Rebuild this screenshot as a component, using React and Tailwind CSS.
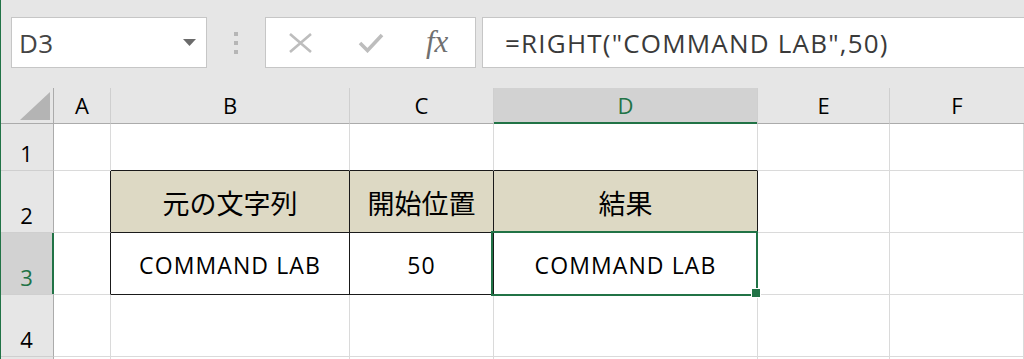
import React from "react";

function HeaderCell({ children, active, last }) {
  return (
    <div
      className={`relative flex items-center justify-center border-b border-[#ababab] ${last ? "" : "border-r border-r-[#cfcfcf]"} ${active ? "bg-[#d2d2d2] text-[#217346]" : "bg-[#e6e6e6] text-black"} text-[22px]`}
      style={{ fontFamily: '"Open Sans", "Noto Sans", sans-serif' }}
    >
      {children}
      {active && <div className="absolute left-0 right-0 bottom-[-1px] h-[2px] bg-[#217346]" />}
    </div>
  );
}

function RowHead({ n, active }) {
  return (
    <div
      className={`relative flex items-end justify-center pb-[6px] border-b border-[#cfcfcf] border-r border-r-[#ababab] ${active ? "bg-[#d2d2d2] text-[#217346]" : "bg-[#e6e6e6] text-black"} text-[22px] leading-none`}
      style={{ fontFamily: '"Open Sans", "Noto Sans", sans-serif' }}
    >
      {n}
      {active && <div className="absolute top-0 bottom-0 right-[-1px] w-[2px] bg-[#217346]" />}
    </div>
  );
}

function Cell({ children, r = "#dadada", b = "#dadada", bg = "bg-white", latin }) {
  return (
    <div
      className={`flex items-center justify-center ${bg} text-black ${latin ? "text-[23px] tracking-[1.1px] pt-[3px]" : "text-[27px] pt-[4px]"}`}
      style={{
        borderRight: `1px solid ${r}`,
        borderBottom: `1px solid ${b}`,
        fontFamily: latin
          ? '"Open Sans", "Noto Sans", sans-serif'
          : '"Noto Sans CJK JP", "Noto Sans", sans-serif',
      }}
    >
      {children}
    </div>
  );
}

export default function App() {
  const K = "#1a1a1a";
  return (
    <div className="relative w-[1024px] h-[359px] overflow-hidden bg-white">
      <div className="absolute left-0 top-0 bottom-0 w-[1px] bg-[#217346] z-20" />
      {/* formula bar */}
      <div className="h-[88px] bg-[#e6e6e6] flex items-start pt-[17px]">
        <div
          className="ml-[11px] w-[196px] h-[51px] bg-white border border-[#c6c6c6] flex items-center justify-between pl-[7px] pr-[10px]"
          style={{ fontFamily: '"Open Sans", "Noto Sans", sans-serif' }}
        >
          <span className="text-[26px] text-[#444] leading-none tracking-[0.5px]">D3</span>
          <svg width="13" height="7" viewBox="0 0 13 7"><path d="M0 0 L13 0 L6.5 7 Z" fill="#6b6b6b" /></svg>
        </div>
        <div className="w-[58px] h-[51px] flex flex-col items-center justify-center gap-[5px]">
          <div className="w-[4px] h-[4px] bg-[#b6b6b6]" />
          <div className="w-[4px] h-[4px] bg-[#b6b6b6]" />
          <div className="w-[4px] h-[4px] bg-[#b6b6b6]" />
        </div>
        <div className="w-[211px] h-[51px] bg-white border border-[#c6c6c6] flex items-center">
          <svg className="ml-[22px]" width="25" height="20" viewBox="0 0 25 20">
            <path d="M2 1 L23 19 M23 1 L2 19" stroke="#bdbdbd" strokeWidth="2.6" fill="none" />
          </svg>
          <svg className="ml-[45px]" width="26" height="20" viewBox="0 0 26 20">
            <path d="M2 10 L9.5 17.5 L24 2" stroke="#bdbdbd" strokeWidth="3.6" fill="none" />
          </svg>
          <span
            className="ml-[42px] mt-[-2px] text-[31px] italic text-[#707070] leading-none"
            style={{ fontFamily: '"Liberation Serif", "DejaVu Serif", serif' }}
          >
            fx
          </span>
        </div>
        <div
          className="ml-[6px] flex-1 h-[51px] bg-white border border-[#c6c6c6] border-r-0 flex items-center pl-[22px]"
          style={{ fontFamily: '"Open Sans", "Noto Sans", sans-serif' }}
        >
          <span className="text-[26px] text-[#3a3a3a] leading-none tracking-[1.2px]">=RIGHT("COMMAND LAB",50)</span>
        </div>
      </div>

      {/* sheet */}
      <div className="relative">
        <div
          className="grid"
          style={{
            gridTemplateColumns: "54px 57px 239px 144px 264px 132px 1fr",
            gridTemplateRows: "36px 47px 62px 62px 62px 20px",
          }}
        >
          {/* header row */}
          <div className="relative bg-[#e6e6e6] border-b border-[#ababab] border-r border-r-[#ababab]">
            <svg className="absolute left-[20px] top-[4px]" width="31" height="29" viewBox="0 0 31 29">
              <path d="M30 0 L30 28 L0 28 Z" fill="#b4b4b4" />
            </svg>
          </div>
          <HeaderCell>A</HeaderCell>
          <HeaderCell>B</HeaderCell>
          <HeaderCell>C</HeaderCell>
          <HeaderCell active>D</HeaderCell>
          <HeaderCell>E</HeaderCell>
          <HeaderCell last>F</HeaderCell>

          {/* row 1 */}
          <RowHead n="1" />
          <Cell />
          <Cell b={K} />
          <Cell b={K} />
          <Cell b={K} />
          <Cell />
          <Cell />

          {/* row 2 */}
          <RowHead n="2" />
          <Cell r={K} />
          <Cell r={K} b={K} bg="bg-[#ddd9c4]">元の文字列</Cell>
          <Cell r={K} b={K} bg="bg-[#ddd9c4]">開始位置</Cell>
          <Cell r={K} b={K} bg="bg-[#ddd9c4]">結果</Cell>
          <Cell />
          <Cell />

          {/* row 3 */}
          <RowHead n="3" active />
          <Cell r={K} />
          <Cell r={K} b={K} latin>COMMAND LAB</Cell>
          <Cell r={K} b={K} latin>50</Cell>
          <Cell r={K} b={K} latin>COMMAND LAB</Cell>
          <Cell />
          <Cell />

          {/* row 4 */}
          <RowHead n="4" />
          <Cell />
          <Cell />
          <Cell />
          <Cell />
          <Cell />
          <Cell />

          {/* row 5 partial */}
          <div className="bg-[#e6e6e6] border-r border-[#ababab]" />
          <Cell />
          <Cell />
          <Cell />
          <Cell />
          <Cell />
          <Cell />
        </div>

        {/* selection */}
        <div className="absolute left-[491px] top-[143px] w-[267px] h-[65px] border-[2px] border-[#217346] pointer-events-none" />
        <div className="absolute left-[752px] top-[201px] w-[8px] h-[8px] bg-[#217346] outline outline-1 outline-white" />
      </div>
    </div>
  );
}
